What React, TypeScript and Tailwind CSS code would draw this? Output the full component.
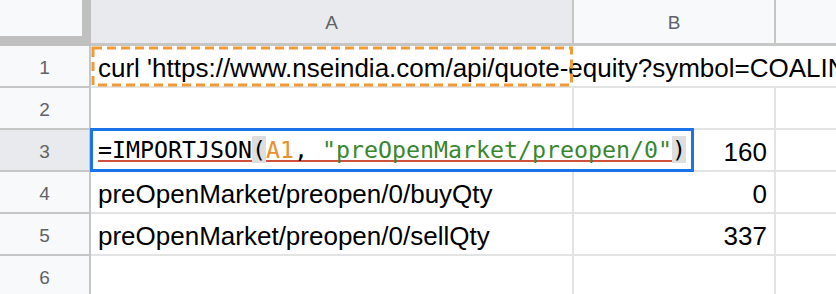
import React from "react";

const cellBase = "border-b-2 border-r-2 border-[#e2e3e3]";
const rowHead =
  "border-b-2 border-r-2 border-[#c4c7c5] flex items-center justify-center pt-[5px] text-[19px] text-[#5f6368]";
const textCell = `${cellBase} flex items-center pt-[4px] pl-[7px] text-[26px] text-black whitespace-nowrap overflow-hidden`;
const numCell = `${cellBase} flex items-center justify-end pt-[4px] pr-[7px] text-[26px] text-black`;

export default function App() {
  return (
    <div className="relative w-[836px] h-[294px] overflow-hidden bg-white font-['Liberation_Sans',Arial,sans-serif]">
      <div className="grid grid-cols-[91px_483px_202px_60px] grid-rows-[46px_repeat(6,42px)]">
        {/* header row */}
        <div className="bg-[#c0c0c0]">
          <div className="w-[82px] h-[36px] bg-[#f8f9fa]" />
        </div>
        <div className="bg-[#e8eaed] border-b-[3px] border-r-2 border-[#c4c7c5] flex items-center justify-center pt-[4px] text-[19px] text-[#5f6368]">
          A
        </div>
        <div className="bg-[#f8f9fa] border-b-[3px] border-r-2 border-[#c4c7c5] flex items-center justify-center pt-[4px] text-[19px] text-[#5f6368]">
          B
        </div>
        <div className="bg-[#f8f9fa] border-b-[3px] border-[#c4c7c5]" />

        {/* row 1 */}
        <div className={`${rowHead} bg-[#f8f9fa]`}>1</div>
        <div className="col-span-3 border-b-2 border-[#e2e3e3] flex items-center pt-[4px] pl-[7px] text-[26px] text-black whitespace-nowrap overflow-hidden">
          curl 'https://www.nseindia.com/api/quote-equity?symbol=COALIN
        </div>

        {/* row 2 */}
        <div className={`${rowHead} bg-[#f8f9fa]`}>2</div>
        <div className={cellBase} />
        <div className={cellBase} />
        <div className="border-b-2 border-[#e2e3e3]" />

        {/* row 3 */}
        <div className={`${rowHead} bg-[#e8eaed]`}>3</div>
        <div className={cellBase} />
        <div className={numCell}>160</div>
        <div className="border-b-2 border-[#e2e3e3]" />

        {/* row 4 */}
        <div className={`${rowHead} bg-[#f8f9fa]`}>4</div>
        <div className={textCell}>preOpenMarket/preopen/0/buyQty</div>
        <div className={numCell}>0</div>
        <div className="border-b-2 border-[#e2e3e3]" />

        {/* row 5 */}
        <div className={`${rowHead} bg-[#f8f9fa]`}>5</div>
        <div className={textCell}>preOpenMarket/preopen/0/sellQty</div>
        <div className={numCell}>337</div>
        <div className="border-b-2 border-[#e2e3e3]" />

        {/* row 6 */}
        <div className={`${rowHead} bg-[#f8f9fa]`}>6</div>
        <div className={cellBase} />
        <div className={cellBase} />
        <div className="border-b-2 border-[#e2e3e3]" />
      </div>

      {/* dashed copy border around A1 */}
      <svg
        className="absolute left-[91px] top-[46px]"
        width="483"
        height="42"
        viewBox="0 0 483 42"
      >
        <rect
          x="2"
          y="2"
          width="478.5"
          height="37"
          fill="none"
          stroke="#f29a35"
          strokeWidth="3"
          strokeDasharray="9 5"
        />
      </svg>

      {/* in-cell formula editor */}
      <div className="absolute left-[90px] top-[128px] w-[604px] h-[44px] border-[3px] border-[#1a73e8] bg-white">
        <div className="absolute left-[5px] top-[29px] w-[588px] h-[2px] bg-[#d0503c]" />
        <div className="relative z-10 pl-[5px] leading-[38px] text-[23.25px] text-black whitespace-pre font-['DejaVu_Sans_Mono',monospace]">
          =IMPORTJSON<span className="bg-[#dedede]">(</span>
          <span className="text-[#e8912c]">A1</span>,{" "}
          <span className="text-[#3a872f]">"preOpenMarket/preopen/0"</span>
          <span className="bg-[#dedede]">)</span>
        </div>
      </div>
    </div>
  );
}
